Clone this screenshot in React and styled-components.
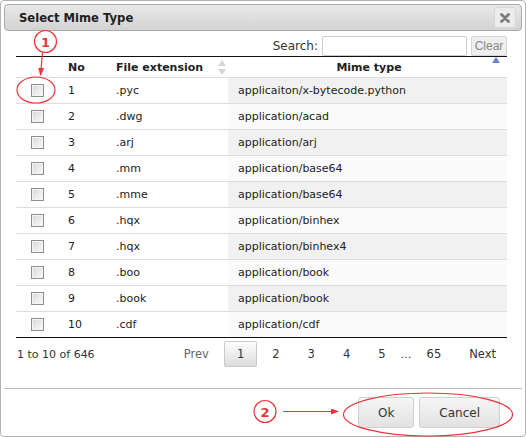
import React from 'react'
import styled, { createGlobalStyle } from 'styled-components'

const rows = [
  [1, '.pyc', 'applicaiton/x-bytecode.python'],
  [2, '.dwg', 'application/acad'],
  [3, '.arj', 'application/arj'],
  [4, '.mm', 'application/base64'],
  [5, '.mme', 'application/base64'],
  [6, '.hqx', 'application/binhex'],
  [7, '.hqx', 'application/binhex4'],
  [8, '.boo', 'application/book'],
  [9, '.book', 'application/book'],
  [10, '.cdf', 'application/cdf'],
]

const pages = ['1', '2', '3', '4', '5']

const App = () => {
  return (
    <Page>
      <GlobalStyle />
      <Dialog>
        <TitleBar>
          <Title>Select Mime Type</Title>
          <CloseButton>
            <svg width="10" height="10" viewBox="0 0 10 10">
              <path d="M1.5 1.5 L8.5 8.5 M8.5 1.5 L1.5 8.5" stroke="#7a7a7a" strokeWidth="2.8" strokeLinecap="round" />
            </svg>
          </CloseButton>
        </TitleBar>

        <Content>
          <SearchRow>
            <SearchLabel>Search:</SearchLabel>
            <SearchInput />
            <ClearButton>Clear</ClearButton>
          </SearchRow>

          <Table>
            <colgroup>
              <col style={{ width: 42 }} />
              <col style={{ width: 48 }} />
              <col style={{ width: 122 }} />
              <col />
            </colgroup>
            <thead>
              <tr>
                <Th />
                <Th>No</Th>
                <Th>
                  <HeadFlex>
                    File extension
                    <svg width="8" height="15" viewBox="0 0 8 15">
                      <path d="M4 0 L8 6 L0 6 Z M4 15 L8 9 L0 9 Z" fill="#d4d4d4" />
                    </svg>
                  </HeadFlex>
                </Th>
                <Th>
                  <HeadCenter>
                    <span />
                    <span>Mime type</span>
                    <SortUp width="8" height="8" viewBox="0 0 8 8">
                      <path d="M4 1 L8 7 L0 7 Z" fill="#6f7fd0" />
                    </SortUp>
                  </HeadCenter>
                </Th>
              </tr>
            </thead>
            <tbody>
              {rows.map(([no, ext, mime], i) => (
                <tr key={no}>
                  <Td $center><CheckBox type="checkbox" /></Td>
                  <Td>{no}</Td>
                  <Td>{ext}</Td>
                  <MimeTd $odd={i % 2 === 0}>{mime}</MimeTd>
                </tr>
              ))}
            </tbody>
          </Table>

          <Footer>
            <Info>1 to 10 of 646</Info>
            <Pager>
              <PageLink $muted>Prev</PageLink>
              {pages.map((p) => (
                <PageLink key={p} $current={p === '1'}>{p}</PageLink>
              ))}
              <Ellipsis>…</Ellipsis>
              <PageLink>65</PageLink>
              <PageLink>Next</PageLink>
            </Pager>
          </Footer>
        </Content>

        <ButtonPane>
          <DialogButton>Ok</DialogButton>
          <DialogButton>Cancel</DialogButton>
        </ButtonPane>
      </Dialog>

      <Annotations width="527" height="438" viewBox="0 0 527 438">
        <defs>
          <marker id="arr" markerWidth="8" markerHeight="6" refX="7" refY="3" orient="auto" markerUnits="userSpaceOnUse">
            <path d="M0 0 L8 3 L0 6 Z" fill="#e8343a" />
          </marker>
        </defs>
        <circle cx="45.5" cy="41.5" r="11" fill="#fff" stroke="#e8343a" strokeWidth="1.2" />
        <text x="45.5" y="46.5" textAnchor="middle" fontFamily="DejaVu Sans, sans-serif" fontWeight="bold" fontSize="13" fill="#e8343a">1</text>
        <line x1="42.5" y1="53" x2="40.5" y2="75" stroke="#e8343a" strokeWidth="1.2" markerEnd="url(#arr)" />
        <ellipse cx="36" cy="90" rx="19" ry="13" fill="none" stroke="#e8343a" strokeWidth="1.2" />

        <circle cx="265" cy="411.5" r="11" fill="#fff" stroke="#e8343a" strokeWidth="1.2" />
        <text x="265" y="416.5" textAnchor="middle" fontFamily="DejaVu Sans, sans-serif" fontWeight="bold" fontSize="13" fill="#e8343a">2</text>
        <line x1="283" y1="411.5" x2="338" y2="411.5" stroke="#e8343a" strokeWidth="1.2" markerEnd="url(#arr)" />
        <ellipse cx="428" cy="414.5" rx="84.5" ry="21.5" fill="none" stroke="#e8343a" strokeWidth="1.2" />
      </Annotations>
    </Page>
  )
}

export default App

const GlobalStyle = createGlobalStyle`
  body {
    margin: 0;
    background: #fff;
    font-family: "DejaVu Sans", Verdana, sans-serif;
    font-size: 11px;
    color: #222;
  }
`

const Page = styled.div`
  position: relative;
  width: 527px;
  height: 438px;
`

const Dialog = styled.div`
  box-sizing: border-box;
  width: 526px;
  height: 437px;
  border: 1px solid #b4b4b4;
  border-radius: 4px;
  padding: 3px;
  display: flex;
  flex-direction: column;
  background: #fff;
`

const TitleBar = styled.div`
  box-sizing: border-box;
  height: 27px;
  border: 1px solid #aaa;
  border-radius: 4px;
  background: linear-gradient(#e9e9e9, #d3d3d3);
  display: flex;
  align-items: center;
  justify-content: space-between;
  padding: 0 5px 0 14px;
`

const Title = styled.div`
  font-weight: bold;
  font-size: 11.6px;
  color: #1e1e1e;
`

const CloseButton = styled.div`
  box-sizing: border-box;
  width: 22px;
  height: 21px;
  border: 1px solid #d8d8d8;
  border-radius: 3px;
  background: #ececec;
  display: flex;
  align-items: center;
  justify-content: center;
`

const Content = styled.div`
  height: 357px;
  padding: 0 15px 0 12px;
  border-bottom: 1px solid #bdbdbd;
`

const SearchRow = styled.div`
  display: flex;
  justify-content: flex-end;
  align-items: center;
  gap: 4px;
  margin-top: 5px;
  height: 20px;
`

const SearchLabel = styled.span`
  font-size: 12px;
  color: #333;
`

const SearchInput = styled.input`
  box-sizing: border-box;
  width: 145px;
  height: 20px;
  border: 1px solid #ccc;
  border-radius: 2px;
  margin: 0;
`

const ClearButton = styled.button`
  box-sizing: border-box;
  height: 20px;
  width: 36px;
  padding: 0;
  margin: 0;
  border: 1px solid #d6d6d6;
  border-radius: 2px;
  background: #efefef;
  color: #888;
  font-family: "Liberation Sans", Arial, sans-serif;
  font-size: 12px;
`

const Table = styled.table`
  width: 100%;
  table-layout: fixed;
  border-collapse: separate;
  border-spacing: 0;
  border-top: 1px solid #111;
  border-bottom: 1px solid #111;
`

const Th = styled.th`
  height: 20px;
  padding: 0 10px;
  font-weight: bold;
  text-align: left;
  color: #222;
`

const HeadFlex = styled.div`
  display: flex;
  align-items: center;
  justify-content: space-between;
  margin-right: -8px;
`

const HeadCenter = styled.div`
  display: grid;
  grid-template-columns: 1fr auto 1fr;
  align-items: start;
  margin-right: -3px;
`

const SortUp = styled.svg`
  justify-self: end;
  margin-top: -5px;
`

const Td = styled.td`
  height: 25px;
  padding: 0 10px;
  border-top: 1px solid #ddd;
  text-align: ${(p) => (p.$center ? 'center' : 'left')};
  white-space: nowrap;
  color: #222;
`

const MimeTd = styled(Td)`
  background: ${(p) => (p.$odd ? '#f1f1f1' : '#fafafa')};
`

const CheckBox = styled.input`
  appearance: none;
  display: block;
  box-sizing: border-box;
  width: 13px;
  height: 13px;
  margin: 0 auto;
  border: 1px solid #8e8e8e;
  background: linear-gradient(135deg, #d8d8d8, #fbfbfb);
  box-shadow: inset 0 0 0 1px #f4f4f4;
`

const Footer = styled.div`
  display: flex;
  justify-content: space-between;
  align-items: center;
  margin-top: 3px;
`

const Info = styled.div`
  font-size: 11px;
  color: #333;
  padding-left: 1px;
`

const Pager = styled.div`
  display: flex;
  align-items: center;
  margin-right: -2px;
`

const PageLink = styled.span`
  box-sizing: border-box;
  height: 26px;
  padding: 0 12px;
  margin-left: 2px;
  display: flex;
  align-items: center;
  border: 1px solid ${(p) => (p.$current ? '#cacaca' : 'transparent')};
  border-radius: 2px;
  background: ${(p) => (p.$current ? 'linear-gradient(#fdfdfd, #dcdcdc)' : 'transparent')};
  color: ${(p) => (p.$muted ? '#666' : '#333')};
  font-size: 11.5px;
`

const Ellipsis = styled.span`
  padding: 0 0 0 2px;
  color: #333;
`

const ButtonPane = styled.div`
  display: flex;
  justify-content: flex-end;
  gap: 5px;
  padding: 8px 22px 0 0;
`

const DialogButton = styled.button`
  box-sizing: border-box;
  height: 31px;
  padding: 0 19px;
  border: 1px solid #d0d0d0;
  border-radius: 3px;
  background: linear-gradient(#f6f6f6, #e2e2e2);
  color: #333;
  font-family: "DejaVu Sans", Verdana, sans-serif;
  font-size: 12px;
`

const Annotations = styled.svg`
  position: absolute;
  left: 0;
  top: 0;
  pointer-events: none;
`
